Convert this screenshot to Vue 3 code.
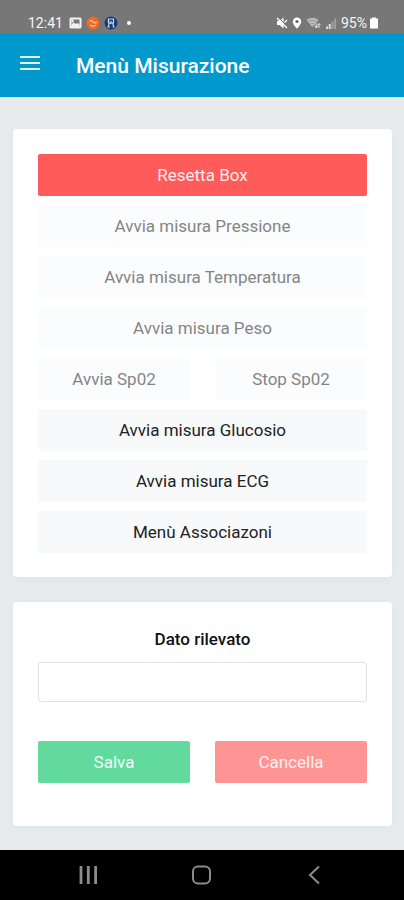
<script setup>
import { ref } from 'vue'

const value = ref('')
const rows = [
  [{ text: 'Resetta Box', kind: 'danger' }],
  [{ text: 'Avvia misura Pressione', disabled: true }],
  [{ text: 'Avvia misura Temperatura', disabled: true }],
  [{ text: 'Avvia misura Peso', disabled: true }],
  [
    { text: 'Avvia Sp02', disabled: true },
    { text: 'Stop Sp02', disabled: true },
  ],
  [{ text: 'Avvia misura Glucosio' }],
  [{ text: 'Avvia misura ECG' }],
  [{ text: 'Menù Associazoni' }],
]
</script>

<template>
  <div class="screen">
    <div class="status">
      <div class="status-group">
        <span class="clock">12:41</span>
        <svg width="13" height="12" viewBox="0 0 13 12" aria-hidden="true">
          <rect x="0.5" y="0.5" width="12" height="11" rx="1.5" fill="#f2f2f2" />
          <path d="M2.500 2.500h8v6.500h-8z" fill="#777" />
          <path d="M2.500 9V7.500l2.300-2 2 1.500 1.700-1L10.500 7.500V9z" fill="#f2f2f2" />
          <path d="M2.500 2.500h2v3h-2z" fill="#f2f2f2" />
        </svg>
        <svg width="14" height="14" viewBox="0 0 14 14" aria-hidden="true">
          <circle cx="7" cy="7" r="6.500" fill="#f26a21" />
          <path d="M3.500 5c1.500-1 2.500-.5 3.500.8s2.500 1.500 3.800.2M4 9c1.500 1.200 4 1.500 5.500.3" fill="none" stroke="#ffc9a3" stroke-width="1.200" />
        </svg>
        <svg width="14" height="14" viewBox="0 0 14 14" aria-hidden="true">
          <circle cx="7" cy="7" r="6.500" fill="#143c78" />
          <path d="M4.500 3h5v4h-5zM3.500 5h2M7 5v3M5.500 7L4 11M8.500 7l1.500 4M3.500 11h2.500M8.500 11h2" fill="none" stroke="#c5d6ea" stroke-width="1.200" />
        </svg>
        <span class="dot"></span>
      </div>
      <div class="status-group right">
        <svg width="12" height="12" viewBox="0 0 12 12" aria-hidden="true">
          <path d="M1 4h2.500l4-3.500v11L3.500 8H1z" fill="#fff" />
          <path d="M2 0l10 10" stroke="#777" stroke-width="1" />
          <path d="M1 1l10 10M8.500 5.500l2.500-2.500" stroke="#fff" stroke-width="1.400" />
        </svg>
        <svg width="10" height="12" viewBox="0 0 10 12" aria-hidden="true">
          <path d="M5 0.500a4.200 4.200 0 0 0-4.200 4.200C.8 7.500 5 11.700 5 11.700s4.200-4.200 4.200-7A4.200 4.200 0 0 0 5 .5z" fill="#fff" />
          <circle cx="5" cy="4.500" r="1.600" fill="#666" />
        </svg>
        <svg width="15" height="12" viewBox="0 0 15 12" aria-hidden="true">
          <path d="M0.500 3Q6.500-1.500 12.500 3L6.500 10.500z" fill="#a6a6a6" />
          <path d="M1 3.500q5.500-3.500 11 0M2.800 5.800q3.700-2.300 7.400 0M4.700 8q1.800-1 3.600 0" fill="none" stroke="#ccc" stroke-width="1" />
          <path d="M10.300 10.500V6.500M8.800 9l1.500 2 1.500-2M13 11V7M11.500 8.200L13 6.500l1.500 1.700" fill="none" stroke="#e6e6e6" stroke-width="1" />
        </svg>
        <svg width="12" height="11" viewBox="0 0 12 11" aria-hidden="true">
          <path d="M1 8.500h2V11H1zM3.700 6h2v5h-2z" fill="#ddd" />
          <path d="M6.400 3.500h2V11h-2zM9.100 .5h2V11h-2z" fill="#a0a0a0" />
        </svg>
        <span class="battery">95%</span>
        <svg width="10" height="12" viewBox="0 0 10 12" aria-hidden="true">
          <path d="M3 0.500h4V1.500h2v10H1v-10h2z" fill="#fff" />
        </svg>
      </div>
    </div>

    <header class="bar">
      <button class="menu" type="button" aria-label="Menu">
        <svg width="20" height="14" viewBox="0 0 20 14" aria-hidden="true">
          <path d="M0 1h20M0 7h20M0 13h20" stroke="#e2f3fa" stroke-width="2" />
        </svg>
      </button>
      <h1>Menù Misurazione</h1>
    </header>

    <main class="content">
      <section class="card actions">
        <div v-for="(row, i) in rows" :key="i" class="row">
          <button
            v-for="b in row"
            :key="b.text"
            type="button"
            class="btn"
            :class="b.kind"
            :disabled="b.disabled"
          >{{ b.text }}</button>
        </div>
      </section>

      <form class="card reading" @submit.prevent>
        <label for="reading">Dato rilevato</label>
        <input id="reading" v-model="value" type="text" />
        <div class="row">
          <button type="submit" class="btn success" disabled>Salva</button>
          <button type="button" class="btn danger" disabled>Cancella</button>
        </div>
      </form>
    </main>

    <nav class="nav">
      <button type="button" aria-label="Recenti">
        <svg width="20" height="20" viewBox="0 0 20 20" aria-hidden="true">
          <path d="M2 1v18M9.300 1v18M16.600 1v18" stroke="#8c8c8c" stroke-width="2.800" />
        </svg>
      </button>
      <button type="button" aria-label="Home">
        <svg width="20" height="20" viewBox="0 0 20 20" aria-hidden="true">
          <rect x="1" y="1.500" width="17" height="17" rx="5" fill="none" stroke="#8c8c8c" stroke-width="2" />
        </svg>
      </button>
      <button type="button" aria-label="Indietro">
        <svg width="20" height="20" viewBox="0 0 20 20" aria-hidden="true">
          <path d="M14 1.500L5 10l9 8.500" fill="none" stroke="#8c8c8c" stroke-width="2" />
        </svg>
      </button>
    </nav>
  </div>
</template>

<style>
body {
  margin: 0;
}
</style>

<style scoped>
.screen {
  display: flex;
  flex-direction: column;
  min-height: 100vh;
  background: #e7ebee;
  font-family: Roboto, "Liberation Sans", sans-serif;
  font-size: 17px;
  color: #111;
}
.status {
  display: flex;
  align-items: flex-end;
  justify-content: space-between;
  height: 33px;
  box-sizing: border-box;
  padding: 0 25px 2px 28px;
  background: #777;
  color: #f5f5f5;
  font-size: 14px;
}
.status-group {
  display: flex;
  align-items: center;
  gap: 4px;
  height: 16px;
}
.clock {
  margin-right: 2px;
}
.dot {
  width: 4px;
  height: 4px;
  margin-left: 5px;
  border-radius: 50%;
  background: #fff;
}
.battery {
  margin-right: -2px;
}
.bar {
  display: flex;
  align-items: center;
  height: 64px;
  padding: 0 20px;
  background: #0099ce;
  color: #fff;
}
.bar h1 {
  margin: 2px 0 0 36px;
  font-size: 21px;
  font-weight: 500;
  line-height: 24px;
}
button {
  font-family: inherit;
  cursor: pointer;
}
.menu {
  display: flex;
  padding: 0;
  margin-bottom: 4px;
  border: 0;
  background: none;
}
.content {
  flex: 1;
  display: flex;
  flex-direction: column;
  gap: 25px;
  padding: 32px 12px 24px 13px;
}
.card {
  display: flex;
  flex-direction: column;
  padding: 25px 25px 24px;
  border-radius: 4px;
  background: #fff;
  box-shadow: 0 2px 8px rgba(110, 130, 150, 0.06);
}
.actions {
  gap: 9px;
}
.row {
  display: flex;
  gap: 25px;
}
.btn {
  flex: 1;
  height: 42px;
  padding: 0;
  border: 0;
  border-radius: 2px;
  background: #f8f9fb;
  color: #222;
  font-size: 17px;
}
.btn:disabled {
  background: #fbfcfd;
  color: #858585;
}
.btn.danger {
  background: #ff5b5b;
  color: #ffecec;
}
.btn.danger:disabled {
  background: #ff9494;
  color: #fff0f0;
}
.btn.success:disabled {
  background: #62da9e;
  color: #effff6;
}
.reading {
  padding-bottom: 43px;
}
.reading label {
  margin-bottom: 10px;
  font-weight: 500;
  line-height: 25px;
  text-align: center;
}
.reading input {
  height: 40px;
  box-sizing: border-box;
  margin-bottom: 39px;
  padding: 0 12px;
  border: 1px solid #dfe1e3;
  border-radius: 3px;
  background: #fff;
  font: inherit;
}
.nav {
  display: flex;
  align-items: center;
  justify-content: center;
  gap: 93px;
  height: 50px;
  background: #000;
}
.nav button {
  display: flex;
  padding: 0;
  border: 0;
  background: none;
}
</style>
